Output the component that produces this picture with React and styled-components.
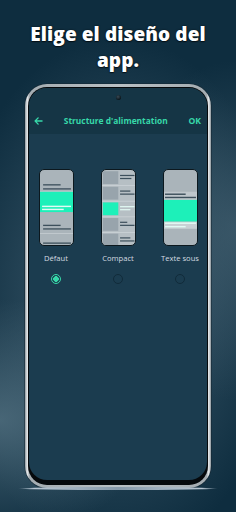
import React, { useState } from 'react'
import styled, { createGlobalStyle } from 'styled-components'

const GlobalStyle = createGlobalStyle`
  html, body {
    margin: 0;
    padding: 0;
    background: #0e2d3f;
  }
  * {
    box-sizing: border-box;
  }
`

const MINT = '#1df0b9'
const ACCENT = '#37d8a9'
const DARK_LINE = '#3d505c'
const LIGHT_LINE = '#e2faf4'

const layouts = [
  { id: 'default', label: 'Défaut' },
  { id: 'compact', label: 'Compact' },
  { id: 'below', label: 'Texte sous' },
]

const DefaultThumb = () => (
  <svg viewBox="0 0 32 74" preserveAspectRatio="none">
    <rect x="3" y="14" width="17" height="1.3" fill={DARK_LINE} />
    <rect x="3" y="18" width="27" height="1.3" fill={DARK_LINE} />
    <rect x="0" y="20.6" width="32" height="0.8" fill="#c6cdd2" />
    <rect x="0" y="21.5" width="32" height="20" fill={MINT} />
    <rect x="2" y="35.2" width="28" height="1.4" fill={LIGHT_LINE} />
    <rect x="2" y="38.2" width="21" height="1.4" fill={LIGHT_LINE} />
    <rect x="3" y="54" width="17" height="1.3" fill={DARK_LINE} />
    <rect x="3" y="57.5" width="27" height="1.3" fill={DARK_LINE} />
    <rect x="0" y="62.3" width="32" height="0.8" fill="#c6cdd2" />
    <rect x="3" y="71.5" width="27" height="1.3" fill={DARK_LINE} />
  </svg>
)

const compactRows = [
  { a: 14, b: 11 },
  { a: 10, b: 14 },
  { a: 14, b: 10, active: true },
  { a: 7, b: 14 },
  { a: 10, b: 14 },
]

const CompactThumb = () => (
  <svg viewBox="0 0 32 74" preserveAspectRatio="none">
    {compactRows.map((r, i) => {
      const top = 1.2 + i * 15.4
      const line = r.active ? LIGHT_LINE : DARK_LINE
      return (
        <g key={i}>
          {i > 0 && <rect x="0" y={top - 1.6} width="32" height="0.8" fill="#ccd3d7" />}
          <rect x="0.8" y={top} width="15" height="12.6" fill={r.active ? MINT : '#98a4ac'} />
          <rect x="17.5" y={top + 3.6} width={r.a} height="1.2" fill={line} />
          <rect x="17.5" y={top + 6.6} width={r.b} height="1.2" fill={line} />
        </g>
      )
    })}
  </svg>
)

const BelowThumb = () => (
  <svg viewBox="0 0 32 74" preserveAspectRatio="none">
    <rect x="0" y="21.5" width="32" height="8.5" fill="#bfc7cc" />
    <rect x="1" y="23.2" width="20" height="1.4" fill={DARK_LINE} />
    <rect x="1" y="26.4" width="30" height="1.4" fill={DARK_LINE} />
    <rect x="0" y="29.5" width="32" height="21.5" fill={MINT} />
    <rect x="0" y="51" width="32" height="7" fill="#c8d0d4" />
    <rect x="1" y="51.8" width="30" height="1.4" fill={LIGHT_LINE} />
    <rect x="1" y="55.2" width="20" height="1.4" fill={LIGHT_LINE} />
  </svg>
)

const thumbs = {
  default: DefaultThumb,
  compact: CompactThumb,
  below: BelowThumb,
}

const App = () => {
  const [selected, setSelected] = useState('default')

  return (
    <Page>
      <GlobalStyle />
      <Headline>
        Elige el diseño del
        <br />
        app.
      </Headline>
      <Phone>
        <Bezel>
          <Screen>
            <Camera />
            <TopBar>
              <BackButton aria-label="Retour">
                <svg viewBox="0 0 10 9" width="9" height="8">
                  <path
                    d="M9 4.5H1.4M4.6 1L1.2 4.5 4.6 8"
                    fill="none"
                    stroke={ACCENT}
                    strokeWidth="1.5"
                    strokeLinecap="round"
                    strokeLinejoin="round"
                  />
                </svg>
              </BackButton>
              <BarTitle>Structure d'alimentation</BarTitle>
              <OkButton>OK</OkButton>
            </TopBar>
            <Options>
              {layouts.map((l) => {
                const Thumb = thumbs[l.id]
                return (
                  <Option key={l.id} onClick={() => setSelected(l.id)}>
                    <Preview $bg={l.id === 'compact' ? '#b6bfc4' : '#aab4ba'}>
                      <Thumb />
                    </Preview>
                    <Label>{l.label}</Label>
                    <Radio $on={selected === l.id} />
                  </Option>
                )
              })}
            </Options>
          </Screen>
        </Bezel>
      </Phone>
      <Reflection />
    </Page>
  )
}

const Page = styled.div`
  width: 236px;
  height: 512px;
  overflow: hidden;
  display: flex;
  flex-direction: column;
  align-items: center;
  background:
    radial-gradient(ellipse 150px 120px at 0% 82%, rgba(88, 118, 134, 0.75), rgba(88, 118, 134, 0) 100%),
    radial-gradient(ellipse 120px 170px at 100% 45%, rgba(80, 108, 124, 0.55), rgba(80, 108, 124, 0) 100%),
    radial-gradient(ellipse 170px 260px at 50% 58%, rgba(70, 100, 118, 0.9), rgba(14, 45, 63, 0) 100%),
    #0e2d3f;
`

const Headline = styled.h1`
  margin: 21px 0 0;
  font-family: 'Open Sans', 'DejaVu Sans', sans-serif;
  font-weight: 800;
  font-size: 19px;
  line-height: 26px;
  letter-spacing: 0.1px;
  color: #ffffff;
  text-align: center;
  text-shadow: 0 0 2px rgba(0, 0, 0, 0.7), 0 1px 1px rgba(0, 0, 0, 0.6);
`

const Phone = styled.div`
  margin-top: 11px;
  width: 186px;
  height: 404px;
  padding: 3px;
  border-radius: 22px;
  background: linear-gradient(90deg, #8d969c 0%, #e8ebed 1.2%, #a4acb1 2.4%, #b9c0c4 50%, #a4acb1 97.6%, #e8ebed 98.8%, #8d969c 100%);
  box-shadow: 0 0 0 0.6px rgba(20, 35, 45, 0.8);
`

const Bezel = styled.div`
  height: 100%;
  padding: 1px 1px 5px;
  border-radius: 19px;
  background: #05090c;
`

const Screen = styled.div`
  position: relative;
  height: 100%;
  border-radius: 18px;
  overflow: hidden;
  background: #1b3c4f;
  display: flex;
  flex-direction: column;
`

const Camera = styled.span`
  position: absolute;
  top: 7px;
  left: 50%;
  width: 5px;
  height: 5px;
  margin-left: -2.5px;
  border-radius: 50%;
  background: radial-gradient(circle at 40% 35%, #3a4a55, #0a151b 70%);
`

const TopBar = styled.div`
  height: 46px;
  flex: 0 0 46px;
  display: grid;
  grid-template-columns: auto 1fr auto;
  align-items: center;
  align-content: end;
  padding: 0 6px 7px 5px;
  background: #153545;
  font-family: 'Open Sans', 'DejaVu Sans', sans-serif;
  font-weight: 700;
  color: ${ACCENT};
`

const BackButton = styled.span`
  display: flex;
  align-items: center;
  height: 12px;
`

const BarTitle = styled.span`
  text-align: center;
  font-size: 8.4px;
  line-height: 12px;
`

const OkButton = styled.span`
  font-size: 8.6px;
  line-height: 12px;
`

const Options = styled.div`
  margin-top: 35px;
  display: grid;
  grid-template-columns: repeat(3, 62px);
  justify-content: center;
`

const Option = styled.div`
  display: flex;
  flex-direction: column;
  align-items: center;
  cursor: pointer;
`

const Preview = styled.div`
  width: 35px;
  height: 77px;
  border: 1.5px solid #0c181e;
  border-radius: 5px;
  overflow: hidden;
  background: ${(p) => p.$bg};

  svg {
    display: block;
    width: 100%;
    height: 100%;
  }
`

const Label = styled.span`
  margin-top: 7px;
  font-family: 'Open Sans', 'DejaVu Sans', sans-serif;
  font-size: 7.6px;
  line-height: 10px;
  color: #d3dbe0;
  white-space: nowrap;
`

const Radio = styled.span`
  margin-top: 11px;
  width: 10px;
  height: 10px;
  border-radius: 50%;
  border: ${(p) => (p.$on ? `1.5px solid ${ACCENT}` : '1px solid #112b3a')};
  background: ${(p) => (p.$on ? `radial-gradient(circle, ${ACCENT} 0 2.6px, #1b3c4f 3px)` : 'transparent')};
`

const Reflection = styled.div`
  margin-top: -1px;
  width: 200px;
  height: 3px;
  border-radius: 50%;
  background: linear-gradient(90deg, rgba(160, 180, 196, 0) 0%, #b7c6d3 8%, #8699aa 50%, #b7c6d3 92%, rgba(160, 180, 196, 0) 100%);
`

export default App
